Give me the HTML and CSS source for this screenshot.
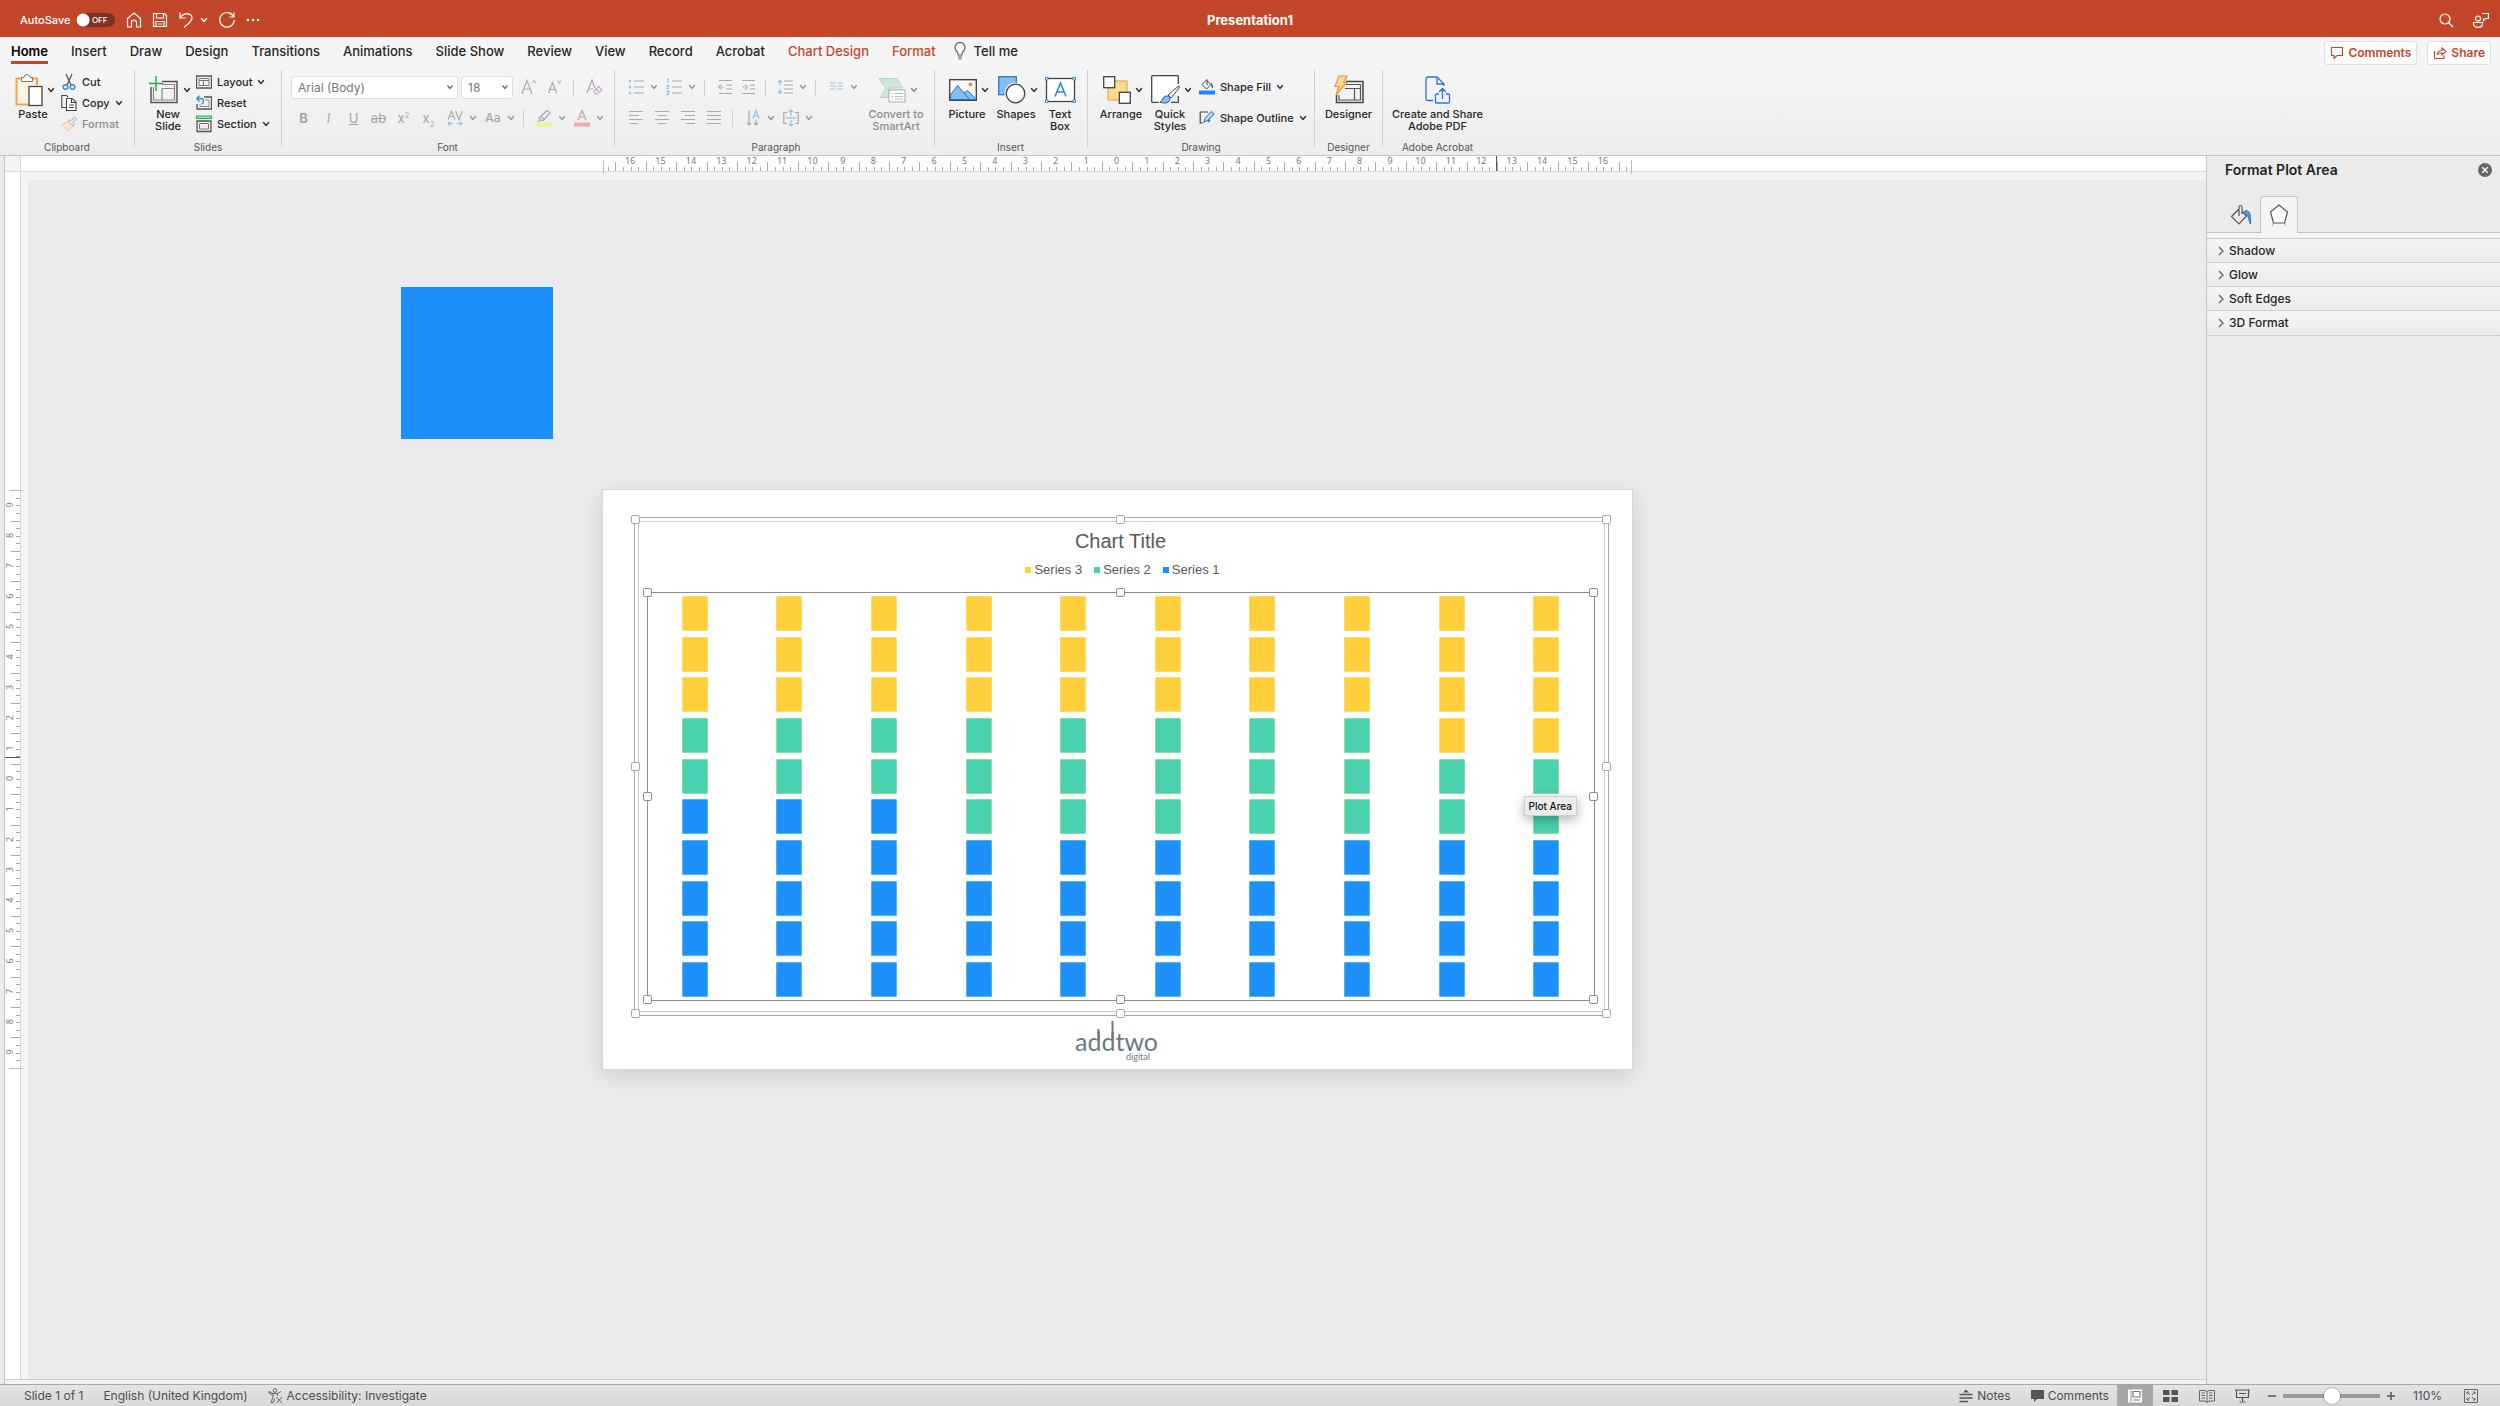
FILE: index.html
```html
<!DOCTYPE html>
<html lang="en">

<head>
    <meta charset="UTF-8">
    <meta name="viewport" content="width=device-width, initial-scale=1.0">

    <link rel="stylesheet" href="styles.css">

    <title>Presentation1</title>
</head>

<body>
    <svg class="defs" width="0" height="0">
        <symbol id="chev" viewBox="0 0 8 8"><path d="M1.5 2.5 L4 5.5 L6.5 2.5" fill="none" stroke="currentColor" stroke-width="1.4" stroke-linecap="round" stroke-linejoin="round"/></symbol>
        <symbol id="right" viewBox="0 0 6 10"><path d="M1 1 L5 5 L1 9" fill="none" stroke="currentColor" stroke-width="1.3"/></symbol>
    </svg>

    <header class="titlebar">
        <div class="quick">
            <label class="autosave">AutoSave <input type="checkbox" class="toggle"><span class="off">OFF</span></label>
            <button aria-label="Home"><svg width="16" height="18" viewBox="0 0 16 18"><path d="M1.5 7.5 L8 2 L14.5 7.5 V16 H10.5 V11.5 A2.5 2.5 0 0 0 5.5 11.5 V16 H1.5 Z"/></svg></button>
            <button aria-label="Save"><svg width="16" height="18" viewBox="0 0 16 18"><path d="M1.5 2.5 H12.5 L14.5 4.5 V15.5 H1.5 Z M4.5 2.5 V7 H11.5 V2.5 M4 15.5 V10.5 H12 V15.5 M6 13 H10"/></svg></button>
            <button aria-label="Undo" class="undo"><svg width="16" height="18" viewBox="0 0 16 18"><path d="M2 1.5 V7 H7.5 M2 7 C5 1.5 13 1.5 14 6.5 C14.5 10 10 13 6 16.5"/></svg></button>
            <button aria-label="Undo list"><svg class="chev" width="8" height="8"><use href="#chev"/></svg></button>
            <button aria-label="Redo"><svg width="18" height="18" viewBox="0 0 18 18"><path d="M15.5 5.5 A7.3 7.3 0 1 0 16.3 9 M16 1.5 V6 H11.5"/></svg></button>
            <button aria-label="More"><svg width="14" height="18" viewBox="0 0 14 18"><g fill="#fff" stroke="none"><circle cx="2" cy="9" r="1.3"/><circle cx="7" cy="9" r="1.3"/><circle cx="12" cy="9" r="1.3"/></g></svg></button>
        </div>
        <h1>Presentation1</h1>
        <div class="title-right">
            <button aria-label="Search"><svg width="16" height="18" viewBox="0 0 16 18"><circle cx="7" cy="8" r="5"/><path d="M10.5 11.5 L15 16"/></svg></button>
            <button aria-label="Share status"><svg width="18" height="18" viewBox="0 0 18 18"><circle cx="6" cy="7.5" r="2.5"/><path d="M1.5 11.5 H10.5 V13 C10.5 17.5 1.5 17.5 1.5 13 Z M10 2.5 H16.5 V7.5 H13.5 L11.5 9.5 V7.5"/></svg></button>
        </div>
    </header>

    <nav class="tabs">
        <a href="#" class="active">Home</a>
        <a href="#">Insert</a>
        <a href="#">Draw</a>
        <a href="#">Design</a>
        <a href="#">Transitions</a>
        <a href="#">Animations</a>
        <a href="#">Slide Show</a>
        <a href="#">Review</a>
        <a href="#">View</a>
        <a href="#">Record</a>
        <a href="#">Acrobat</a>
        <a href="#" class="context">Chart Design</a>
        <a href="#" class="context">Format</a>
        <a href="#" class="tell"><svg width="12" height="18" viewBox="0 0 12 18" fill="none" stroke="#555" stroke-width="1.1"><path d="M4 13 V11.5 C3.5 9.5 1 8.5 1 5.5 A5 5 0 0 1 11 5.5 C11 8.5 8.5 9.5 8 11.5 V13 Z M4 15 H8 M4.5 17 H7.5"/></svg>Tell me</a>
        <div class="tab-buttons">
            <button><svg width="14" height="14" viewBox="0 0 14 14"><path d="M1.5 1.5 H12.5 V9.5 H7 L4 12.5 V9.5 H1.5 Z"/></svg>Comments</button>
            <button><svg width="14" height="14" viewBox="0 0 14 14"><path d="M1.5 5 V12.5 H11 V9.5 M4 9 C4.5 6 6.5 4.5 9 4.5 V2 L13 5.5 L9 9 V6.7 C7 6.7 5 7.5 4 9 Z"/></svg>Share</button>
        </div>
    </nav>

    <section class="ribbon">
        <div class="group clipboard">
            <div class="content">
                <button class="big">
                    <span class="pic"><svg width="28" height="34" viewBox="0 0 28 34" fill="none"><path d="M8 5.5 H1.5 V31.5 H14" stroke="#f0a33f" stroke-width="2"/><path d="M16 5.5 H22 V12" stroke="#f0a33f" stroke-width="2"/><path d="M3 7 H20 V13 H12 V30 H3 Z" fill="#fdf5e4"/><path d="M6.5 8.5 V4.5 H9 A3 3 0 0 1 15 4.5 H17.5 V8.5 Z" fill="#fff" stroke="#777"/><rect x="14" y="13.5" width="13" height="19" fill="#fff" stroke="#444" stroke-width="1.3"/></svg><svg class="chev" width="8" height="8"><use href="#chev"/></svg></span>
                    Paste
                </button>
                <div class="col">
                    <button class="small"><svg width="16" height="18" viewBox="0 0 16 18" fill="none"><path d="M5 1 L10 12 M11 1 L6 12" stroke="#555" stroke-width="1.3"/><circle cx="4.5" cy="14" r="2.3" stroke="#2b88d8" stroke-width="1.4"/><circle cx="11.5" cy="14" r="2.3" stroke="#2b88d8" stroke-width="1.4"/></svg>Cut</button>
                    <button class="small"><svg width="16" height="18" viewBox="0 0 16 18" fill="none" stroke="#444" stroke-width="1.1"><path d="M5 13.5 H.8 V1.5 H5.5 L7 3"/><path d="M5.5 4.5 H11 L15 8 V16.5 H5.5 Z" fill="#fff"/><path d="M10.5 4.5 V8.5 H15 M8 11 H13 M8 13.5 H13"/></svg>Copy<svg class="chev" width="8" height="8"><use href="#chev"/></svg></button>
                    <button class="small off-btn" disabled><svg width="16" height="18" viewBox="0 0 16 18" fill="none"><path d="M7.5 6.5 L12 11 L7 16 L1 9.5 Z" fill="#fbe3cd" stroke="#f2c7a0"/><path d="M7 6 L9 4.5 L10.5 6 L13.5 2 L15.5 4 L12 7.5 L13.5 9.5 L12 11 Z" stroke="#aaa"/></svg>Format</button>
                </div>
            </div>
            <div class="name">Clipboard</div>
        </div>
        <div class="sep"></div>
        <div class="group slides">
            <div class="content">
                <button class="big">
                    <span class="pic"><svg width="30" height="30" viewBox="0 0 30 30" fill="none"><path d="M13 6.5 H28 V27.5 H2 V12" stroke="#555" stroke-width="1.5"/><path d="M13 9.5 H25.5 V25 H4.5 V12 M13 13.5 H25.5 M13 13.5 V25" stroke="#888" stroke-width="1.2"/><path d="M7 1 V16 M0 8.5 H14" stroke="#1fae54" stroke-width="1.5"/></svg><svg class="chev" width="8" height="8"><use href="#chev"/></svg></span>
                    New<br>Slide
                </button>
                <div class="col">
                    <button class="small"><svg width="16" height="16" viewBox="0 0 16 16" fill="none" stroke="#555"><path d="M.5 2 H15.5 V14 H.5 Z" stroke-width="1.3"/><path d="M3 4.5 H13 V11.5 H3 Z M3 6.5 H13 M7.5 6.5 V11.5" stroke="#777"/></svg>Layout<svg class="chev" width="8" height="8"><use href="#chev"/></svg></button>
                    <button class="small"><svg width="16" height="16" viewBox="0 0 16 16" fill="none" stroke="#555"><path d="M8 2 H15.5 V14 H1 V9" stroke-width="1.3"/><path d="M9 5 H13 V11.5 H4 V9" stroke="#888"/><path d="M1 3.5 H5 C8 3.5 8 8 6 9 M3.5 .8 L.8 3.5 L3.5 6.5" stroke="#2b88d8" stroke-width="1.3"/></svg>Reset</button>
                    <button class="small"><svg width="16" height="18" viewBox="0 0 16 18" fill="none" stroke="#555"><rect x=".5" y="1" width="15" height="2.5" stroke="#1fae54" fill="#a5dfba"/><path d="M1 6 H15 V16.5 H1 Z" stroke-width="1.3"/><path d="M3.5 8.5 H12.5 V14 H3.5 Z" stroke="#777"/></svg>Section<svg class="chev" width="8" height="8"><use href="#chev"/></svg></button>
                </div>
            </div>
            <div class="name">Slides</div>
        </div>
        <div class="sep"></div>
        <div class="group font">
            <div class="content rows">
                <div class="row">
                    <select class="family" aria-label="Font" disabled><option>Arial (Body)</option></select>
                    <select class="size" aria-label="Font size" disabled><option>18</option></select>
                    <button class="tool" disabled><svg width="16" height="18" viewBox="0 0 16 18"><path d="M1 16 L6 2.5 L11 16 M3 11 H9"/><path class="b" d="M11 5 L13 2.5 L15 5"/></svg></button>
                    <button class="tool" disabled><svg width="16" height="18" viewBox="0 0 16 18"><path d="M1.5 15 L5.5 4.5 L9.5 15 M3 11.5 H8"/><path class="b" d="M10.5 2.5 L12.5 5 L14.5 2.5"/></svg></button>
                    <i class="bar"></i>
                    <button class="tool" disabled><svg width="18" height="18" viewBox="0 0 18 18"><path d="M1 15 L6 2 L9 10 M3 11 H7"/><path d="M8 13 L12.5 8.5 L16 11.5 L11.5 16 H9.5 Z M10 11 L13.5 14.5" stroke="#d3a0d8"/></svg></button>
                </div>
                <div class="row">
                    <button class="letter" disabled><b>B</b></button>
                    <button class="letter" disabled><em>I</em></button>
                    <button class="letter" disabled><u>U</u></button>
                    <button class="letter" disabled><s>ab</s></button>
                    <button class="letter" disabled>x<sup>2</sup></button>
                    <button class="letter" disabled>x<sub>2</sub></button>
                    <button class="drop" disabled><svg width="16" height="18" viewBox="0 0 16 18"><path d="M1 10.5 L4.5 2 L8 10.5 M2.2 7.5 H6.8 M8.5 2 L12 10.5 L15.5 2"/><path class="b" d="M1 14.5 H6.5 M9.5 14.5 H15 M3 12.5 L1 14.5 L3 16.5 M13 12.5 L15 14.5 L13 16.5"/></svg><svg class="chev" width="8" height="8"><use href="#chev"/></svg></button>
                    <button class="drop" disabled><span class="aa">Aa</span><svg class="chev" width="8" height="8"><use href="#chev"/></svg></button>
                    <i class="bar"></i>
                    <button class="drop" disabled><svg width="16" height="18" viewBox="0 0 16 18"><path d="M4 11 L3 9 L11 1.5 L14 4 L7 11.5 L4 11 L2 13 M5 7.5 L8.5 10.5"/><path d="M0 15.5 H16" stroke="#f5f08f" stroke-width="4"/></svg><svg class="chev" width="8" height="8"><use href="#chev"/></svg></button>
                    <button class="drop" disabled><svg width="16" height="18" viewBox="0 0 16 18"><path d="M4 11 L8 1.5 L12 11 M5.3 8 H10.7"/><path d="M0 15.5 H16" stroke="#f7a6a0" stroke-width="4"/></svg><svg class="chev" width="8" height="8"><use href="#chev"/></svg></button>
                </div>
            </div>
            <div class="name">Font</div>
        </div>
        <div class="sep"></div>
        <div class="group paragraph">
            <div class="content">
                <div class="rows">
                    <div class="row">
                        <button class="drop" disabled><svg width="16" height="18" viewBox="0 0 16 18"><path d="M6 3 H16 M6 9 H16 M6 15 H16"/><path class="b" d="M1 3 H3 M1 9 H3 M1 15 H3" stroke-width="2.5"/></svg><svg class="chev" width="8" height="8"><use href="#chev"/></svg></button>
                        <button class="drop" disabled><svg width="16" height="18" viewBox="0 0 16 18"><path d="M6 3 H16 M6 9 H16 M6 15 H16"/><path class="b" d="M1 1.5 L2 1 V4.5 M.5 7.5 H3 L.5 10.5 H3 M.5 13 H3 L1.5 14.5 L3 15.5 L.5 17"/></svg><svg class="chev" width="8" height="8"><use href="#chev"/></svg></button>
                        <i class="bar"></i>
                        <button class="tool" disabled><svg width="16" height="18" viewBox="0 0 16 18"><path d="M2 2.5 H15 M9 7 H15 M9 11 H15 M2 15.5 H15"/><path class="b" d="M7 9 H1.5 M4 6.5 L1.5 9 L4 11.5"/></svg></button>
                        <button class="tool" disabled><svg width="16" height="18" viewBox="0 0 16 18"><path d="M1 2.5 H14 M9 7 H14 M9 11 H14 M1 15.5 H14"/><path class="b" d="M1 9 H6.5 M4 6.5 L6.5 9 L4 11.5"/></svg></button>
                        <i class="bar"></i>
                        <button class="drop" disabled><svg width="16" height="18" viewBox="0 0 16 18"><path d="M7 3 H16 M7 7 H16 M7 11 H16 M7 15 H16"/><path class="b" d="M3 2.5 V7.5 M3 10.5 V15.5 M1 4.5 L3 2.5 L5 4.5 M1 13.5 L3 15.5 L5 13.5"/></svg><svg class="chev" width="8" height="8"><use href="#chev"/></svg></button>
                        <i class="bar"></i>
                        <button class="drop" disabled><svg width="16" height="18" viewBox="0 0 16 18"><path class="b" d="M2 5 H7.5 M2 8 H7.5 M2 11 H7.5 M9.5 5 H15 M9.5 8 H15 M9.5 11 H15"/></svg><svg class="chev" width="8" height="8"><use href="#chev"/></svg></button>
                    </div>
                    <div class="row">
                        <button class="tool" disabled><svg width="16" height="18" viewBox="0 0 16 18"><path d="M1 2.5 H15 M1 6.5 H11 M1 10.5 H15 M1 14.5 H10"/></svg></button>
                        <button class="tool" disabled><svg width="16" height="18" viewBox="0 0 16 18"><path d="M1 2.5 H15 M3.5 6.5 H12.5 M1 10.5 H15 M3.5 14.5 H12.5"/></svg></button>
                        <button class="tool" disabled><svg width="16" height="18" viewBox="0 0 16 18"><path d="M1 2.5 H15 M5 6.5 H15 M1 10.5 H15 M6 14.5 H15"/></svg></button>
                        <button class="tool" disabled><svg width="16" height="18" viewBox="0 0 16 18"><path d="M1 2.5 H15 M1 6.5 H15 M1 10.5 H15 M1 14.5 H15"/></svg></button>
                        <i class="bar"></i>
                        <button class="drop" disabled><svg width="16" height="18" viewBox="0 0 16 18"><path d="M4 1.5 V16 M2 14 L4 16 L6 14 M11 10.5 V16 M9 14 L11 16 L13 14"/><path class="b" d="M8 9.5 L11 1.5 L14 9.5 M9 7 H13"/></svg><svg class="chev" width="8" height="8"><use href="#chev"/></svg></button>
                        <button class="drop" disabled><svg width="16" height="18" viewBox="0 0 16 18"><path d="M4 3.5 H.8 V14.5 H4 M12 3.5 H15.2 V14.5 H12 M3 9 H13"/><path class="b" d="M8 1 V7 M8 11 V17 M6 3 L8 1 L10 3 M6 15 L8 17 L10 15"/></svg><svg class="chev" width="8" height="8"><use href="#chev"/></svg></button>
                    </div>
                </div>
                <button class="big off-btn" disabled>
                    <span class="pic"><svg width="28" height="26" viewBox="0 0 28 26"><path d="M1 1.5 H19 L25 11 H11 V20.5 H2 L8 11 Z" fill="#cfe8d5" stroke="#b3d9bd"/><rect x="11" y="13" width="16" height="12" fill="#fff" stroke="#aaa"/><path d="M13.5 16.5 H15 M17 16.5 H25 M13.5 19.5 H15 M17 19.5 H25 M13.5 22 H15 M17 22 H25" stroke="#bbb"/></svg><svg class="chev" width="8" height="8"><use href="#chev"/></svg></span>
                    Convert to<br>SmartArt
                </button>
            </div>
            <div class="name">Paragraph</div>
        </div>
        <div class="sep"></div>
        <div class="group insert">
            <div class="content">
                <button class="big">
                    <span class="pic"><svg width="28" height="22" viewBox="0 0 28 22"><rect x=".7" y=".7" width="26.6" height="20.6" fill="#fff" stroke="#444" stroke-width="1.4"/><path d="M1.5 16 L8.5 6.5 L15 14 L18.5 11.5 L26.5 19.5 V20.5 H1.5 Z" fill="#83bef0" stroke="#1f74c4"/><path d="M15 14 L20.5 20.5" stroke="#1f74c4"/><circle cx="21.5" cy="5.5" r="2" fill="#f28c3c"/></svg><svg class="chev" width="8" height="8"><use href="#chev"/></svg></span>
                    Picture
                </button>
                <button class="big">
                    <span class="pic"><svg width="28" height="28" viewBox="0 0 28 28"><rect x=".7" y=".7" width="17.6" height="18" fill="#83bef0" stroke="#1f74c4" stroke-width="1.2"/><circle cx="17.5" cy="17.5" r="11" fill="#f3f3f3"/><circle cx="17.5" cy="17.5" r="9.3" fill="#fff" stroke="#444" stroke-width="1.3"/></svg><svg class="chev" width="8" height="8"><use href="#chev"/></svg></span>
                    Shapes
                </button>
                <button class="big narrow">
                    <span class="pic"><svg width="31" height="26" viewBox="0 0 31 26"><rect x="1.5" y="1.5" width="28" height="23" fill="#fff" stroke="#444" stroke-width="1.3"/><path d="M10 19.5 L15.5 6 L21 19.5 M12 15 H19" fill="none" stroke="#2b88d8" stroke-width="1.6"/><path d="M.5 .5 H3 V3 H.5 Z M28 .5 H30.5 V3 H28 Z M.5 23 H3 V25.5 H.5 Z M28 23 H30.5 V25.5 H28 Z" fill="#fff" stroke="#2b88d8"/></svg></span>
                    Text<br>Box
                </button>
            </div>
            <div class="name">Insert</div>
        </div>
        <div class="sep"></div>
        <div class="group drawing">
            <div class="content">
                <button class="big">
                    <span class="pic"><svg width="28" height="28" viewBox="0 0 28 28"><rect x="5" y="5" width="19" height="19" fill="#fadc8e" stroke="#efa050" stroke-width="1.2"/><rect x=".7" y=".7" width="11" height="11" fill="#fff" stroke="#444" stroke-width="1.3"/><rect x="16.3" y="16.3" width="11" height="11" fill="#fff" stroke="#444" stroke-width="1.3"/></svg><svg class="chev" width="8" height="8"><use href="#chev"/></svg></span>
                    Arrange
                </button>
                <button class="big">
                    <span class="pic"><svg width="29" height="29" viewBox="0 0 29 29"><path d="M8 27.3 H1.5 Q.7 27.3 .7 26.5 V1.5 Q.7 .7 1.5 .7 H26.5 Q27.3 .7 27.3 1.5 V9 M27.3 21 V27.3 H20" fill="#fff" stroke="#444" stroke-width="1.3"/><path d="M17 20 L27 11.5 Q29 10.5 28 13 L20 23 Z" fill="#fff" stroke="#444"/><path d="M9 27 C12 26 11 22 15 21 C19 21 20 24 18 26.5 C16 28.5 12 28.5 9 27 Z" fill="#83bef0" stroke="#1f5f9f"/></svg><svg class="chev" width="8" height="8"><use href="#chev"/></svg></span>
                    Quick<br>Styles
                </button>
                <div class="rows">
                    <div class="row"><button class="small"><svg width="16" height="18" viewBox="0 0 16 18" fill="none"><path d="M3 6.5 L8 1.5 V7 M8 2.5 L12 6.5 L7.5 11 L3 6.5" stroke="#444"/><path d="M12 5 Q14.5 6 14 10.5 Q12 9 12 6" fill="#1f5f9f"/><path d="M0 14.5 H16" stroke="#1c87fb" stroke-width="4"/></svg>Shape Fill<svg class="chev" width="8" height="8"><use href="#chev"/></svg></button></div>
                    <div class="row"><button class="small"><svg width="16" height="18" viewBox="0 0 16 18" fill="none"><path d="M9 3 H1.2 V14 H4 M9 13 L11 11" stroke="#444" stroke-width="1.2"/><path d="M5 13 L6 9.5 L12.5 2.5 L15 5 L8.5 11.5 Z" fill="#cfe6fa" stroke="#2b88d8" stroke-width="1.1"/></svg>Shape Outline<svg class="chev" width="8" height="8"><use href="#chev"/></svg></button></div>
                </div>
            </div>
            <div class="name">Drawing</div>
        </div>
        <div class="sep"></div>
        <div class="group designer">
            <div class="content">
                <button class="big">
                    <span class="pic"><svg width="30" height="30" viewBox="0 0 30 30" fill="none"><path d="M12 6.5 H29 V27.5 H2.5 V20" stroke="#444" stroke-width="1.5"/><path d="M12 9.5 H26.5 V25 H5 V20 M11 13.5 H26.5 M20.5 13.5 V25" stroke="#555" stroke-width="1.2"/><path d="M5 1 H13 L9.5 7.5 H12.5 L2 20 L5 11.5 H1 Z" fill="#fadc8e" stroke="#ef8f3c" stroke-width="1.2"/></svg></span>
                    Designer
                </button>
            </div>
            <div class="name">Designer</div>
        </div>
        <div class="sep"></div>
        <div class="group acrobat">
            <div class="content">
                <button class="big">
                    <span class="pic"><svg width="26" height="28" viewBox="0 0 26 28" fill="none" stroke="#2a73e8" stroke-width="1.3" stroke-linejoin="round"><path d="M8 24.5 H3 Q1 24.5 1 22.5 V3 Q1 1 3 1 H12 L19 8 V10 M12 1 V8 H19"/><path d="M14 18 H11.5 Q10.5 18 10.5 19 V26 Q10.5 27 11.5 27 H23.5 Q24.5 27 24.5 26 V19 Q24.5 18 23.5 18 H21 M17.5 23 V13 M14 16 L17.5 12.5 L21 16"/></svg></span>
                    Create and Share<br>Adobe PDF
                </button>
            </div>
            <div class="name">Adobe Acrobat</div>
        </div>
    </section>

    <main>
        <div class="editor">
            <div class="corner"></div>
            <div class="ruler-h"><svg id="rulerH" width="1029" height="18"></svg></div>
            <div class="ruler-v"><svg id="rulerV" width="18" height="579"></svg></div>
            <div class="canvas">
                <div class="shape"></div>
                <div class="slide">
                    <div class="chart">
                        <h2>Chart Title</h2>
                        <ul class="legend">
                            <li class="s3">Series 3</li>
                            <li class="s2">Series 2</li>
                            <li class="s1">Series 1</li>
                        </ul>
                        <div class="plot">
                            <div class="cells" id="cells"></div>
                            <i class="h nw"></i><i class="h n"></i><i class="h ne"></i><i class="h e"></i>
                            <i class="h se"></i><i class="h s"></i><i class="h sw"></i><i class="h w"></i>
                        </div>
                        <i class="h soft nw"></i><i class="h soft n"></i><i class="h soft ne"></i><i class="h soft e"></i>
                        <i class="h soft se"></i><i class="h soft s"></i><i class="h soft sw"></i><i class="h soft w"></i>
                    </div>
                    <svg class="logo" width="90" height="42" viewBox="0 0 90 42">
                        <g stroke="#6b7884" stroke-width="2"><path d="M24.5 9 V20 M38.5 1 V20"/></g>
                        <text x="1" y="31" font-size="25">addtwo</text>
                        <text x="52" y="40" font-size="9">digital</text>
                    </svg>
                    <div class="tip">Plot Area</div>
                </div>
            </div>
            <div class="vscroll"></div>
        </div>

        <aside class="pane">
            <div class="pane-head">
                <h3>Format Plot Area</h3>
                <button aria-label="Close"><svg width="14" height="14" viewBox="0 0 14 14"><circle cx="7" cy="7" r="7" fill="#666"/><path d="M4.3 4.3 L9.7 9.7 M9.7 4.3 L4.3 9.7" stroke="#fff" stroke-width="1.3"/></svg></button>
            </div>
            <div class="pane-tabs">
                <button aria-label="Fill and line"><svg width="22" height="22" viewBox="0 0 22 22" fill="none"><path d="M9 12 V3.5 Q9 1.5 10.5 1.5 Q12 1.5 12 3.5 V10 M9 5 L1.5 12.5 L9 20 L16.5 12 L12 7.5" stroke="#555" stroke-width="1.2"/><path d="M14 7.5 C18 5 21.5 8 20.5 20 C18.5 17 19 11 15.5 10 Z" fill="#4ba0e8" stroke="#1f74c4"/></svg></button>
                <button aria-label="Effects" class="on"><svg width="20" height="24" viewBox="0 0 20 24" fill="none"><path d="M10 2 L18.5 9 L15.5 20 H4.5 L1.5 9 Z" fill="#fff" stroke="#555" stroke-width="1.2"/><path d="M4 20 L3.5 23 M16 20 L16.5 23" stroke="#aaa"/></svg></button>
            </div>
            <div class="sections">
                <button><svg width="6" height="10"><use href="#right"/></svg>Shadow</button>
                <button><svg width="6" height="10"><use href="#right"/></svg>Glow</button>
                <button><svg width="6" height="10"><use href="#right"/></svg>Soft Edges</button>
                <button><svg width="6" height="10"><use href="#right"/></svg>3D Format</button>
            </div>
        </aside>
    </main>

    <footer class="status">
        <span>Slide 1 of 1</span>
        <button>English (United Kingdom)</button>
        <button class="access"><svg width="15" height="16" viewBox="0 0 15 16" fill="none" stroke="#666"><circle cx="7" cy="2.5" r="1.8"/><path d="M1 3.5 L5 5.5 V9 L3 14.5 L5 15 L7 10.5 M13 3.5 L9.5 5.5 V8 M5 5.5 H9.5 M1 3.5 L.8 5 L4.5 7 M8.5 9 L14 15 M14 9 L8.5 15"/></svg>Accessibility: Investigate</button>
        <div class="right">
            <button class="notes"><svg width="14" height="14" viewBox="0 0 14 14"><path d="M7 .5 L10 3.5 H4 Z" fill="#555"/><path d="M.5 5.5 H13.5 M.5 9 H13.5 M.5 12.5 H9" stroke="#555" stroke-width="1.3"/></svg>Notes</button>
            <button class="cmts"><svg width="13" height="13" viewBox="0 0 13 13"><path d="M0 1 H13 V10 H6 L3 13 V10 H0 Z" fill="#555"/></svg>Comments</button>
            <button class="view on" aria-label="Normal"><svg width="14" height="14" viewBox="0 0 14 14" fill="none"><path d="M0 .5 H14 V13.5 H0 Z" fill="#fff"/><path d="M5 2.5 H12 V8 H5 Z M5 11 H12" stroke="#777" stroke-width="1.2"/><path d="M3 .5 V13.5" stroke="#999"/></svg></button>
            <button class="view" aria-label="Slide sorter"><svg width="15" height="12" viewBox="0 0 15 12"><path d="M0 0 H6.5 V5 H0 Z M8.5 0 H15 V5 H8.5 Z M0 7 H6.5 V12 H0 Z M8.5 7 H15 V12 H8.5 Z" fill="#555"/></svg></button>
            <button class="view" aria-label="Reading view"><svg width="16" height="14" viewBox="0 0 16 14" fill="none" stroke="#666"><path d="M.5 1.5 H6 L8 2.5 L10 1.5 H15.5 V12 H10 L8 13.5 L6 12 H.5 Z M8 2.5 V13 M2.5 4 H6 M2.5 6.5 H6 M2.5 9 H6 M10 4 H13.5 M10 6.5 H13.5 M10 9 H13.5"/></svg></button>
            <button class="view" aria-label="Slide show"><svg width="15" height="14" viewBox="0 0 15 14" fill="none" stroke="#555" stroke-width="1.2"><path d="M0 1 H15 M1.5 1 V8.5 H13.5 V1 M4 4.5 H11 M7.5 8.5 V12 M4.5 13 H10.5"/></svg></button>
            <button class="zoom-btn" aria-label="Zoom out"><svg width="8" height="8"><path d="M0 4 H8" stroke="#555" stroke-width="1.5"/></svg></button>
            <input type="range" min="0" max="100" value="51" aria-label="Zoom">
            <button class="zoom-btn" aria-label="Zoom in"><svg width="8" height="8"><path d="M0 4 H8 M4 0 V8" stroke="#555" stroke-width="1.5"/></svg></button>
            <span class="pct">110%</span>
            <button class="fit" aria-label="Fit slide"><svg width="14" height="14" viewBox="0 0 14 14" fill="none" stroke="#666"><path d="M.5 .5 H13.5 V13.5 H.5 Z M3 5 V3 H5 M9 3 H11 V5 M11 9 V11 H9 M5 11 H3 V9 M3 3 L6 6 M11 3 L8 6 M11 11 L8 8 M3 11 L6 8"/></svg></button>
        </div>
    </footer>

    <script type="text/javascript">
        // rows from the top, one letter per column
        let rows = [
            'yyyyyyyyyy',
            'yyyyyyyyyy',
            'yyyyyyyyyy',
            'ggggggggyy',
            'gggggggggg',
            'bbbggggggg',
            'bbbbbbbbbb',
            'bbbbbbbbbb',
            'bbbbbbbbbb',
            'bbbbbbbbbb'
        ];
        let cells = document.querySelector('#cells');

        rows.forEach((row) => {
            row.split('').forEach((c) => {
                let el = document.createElement('i');
                el.className = c;
                cells.appendChild(el);
            })
        })

        function drawRuler(svg, length, max, vertical, cursor) {
            let cm = 30.4;
            let mid = length / 2;
            let out = '';

            function tick(pos, from, to, color) {
                pos = Math.floor(pos) + 0.5;
                out += vertical
                    ? `<path d="M${from} ${pos} H${to}" stroke="${color}"/>`
                    : `<path d="M${pos} ${from} V${to}" stroke="${color}"/>`;
            }

            for (let q = -Math.floor(mid / cm * 4); q <= mid / cm * 4; q++) {
                let half = Math.abs(q % 4) == 2;
                tick(mid + q * cm / 4, half ? 6 : 11, 15, '#aaa');
            }
            for (let n = -max; n <= max; n++) {
                let pos = mid + n * cm - 1;
                out += vertical
                    ? `<text transform="translate(8 ${pos}) rotate(-90)">${Math.abs(n)}</text>`
                    : `<text x="${pos}" y="8">${Math.abs(n)}</text>`;
            }
            tick(0, 4, 18, '#bbb');
            tick(length - 1, 4, 18, '#bbb');
            tick(cursor, 0, 15, '#555');
            svg.innerHTML = out;
        }

        drawRuler(document.querySelector('#rulerH'), 1029, 16, false, 893);
        drawRuler(document.querySelector('#rulerV'), 579, 9, true, 267);
    </script>
</body>

</html>
```
FILE: styles.css
```css
* {
    box-sizing: border-box;
}

html,
body {
    height: 100%;
    margin: 0;
}

body {
    display: flex;
    flex-direction: column;
    overflow: hidden;
    background-color: #ebebeb;
    color: #262626;
    font: 11px/12px Inter, "Liberation Sans", sans-serif;
}

button {
    padding: 0;
    border: 0;
    background: none;
    color: inherit;
    font: inherit;
}

h1,
h2,
h3,
ul {
    margin: 0;
    padding: 0;
}

svg {
    flex: none;
    display: block;
}

.defs {
    position: absolute;
}

.chev {
    color: #333;
}

/* Title bar */
.titlebar {
    display: grid;
    grid-template-columns: 1fr auto 1fr;
    align-items: center;
    height: 37px;
    padding: 2px 10px 0;
    background-color: #c24728;
    color: #fff;
}

.titlebar h1 {
    font-size: 13px;
    line-height: 16px;
    font-weight: 700;
}

.titlebar svg {
    fill: none;
    stroke: #fff;
    stroke-width: 1.2;
}

.titlebar .chev {
    color: #fff;
    stroke: none;
}

.quick {
    display: flex;
    align-items: center;
    gap: 10px;
    padding-left: 10px;
}

.autosave {
    position: relative;
    display: flex;
    align-items: center;
    gap: 6px;
    margin-right: 1px;
    font-weight: 500;
}

.toggle {
    appearance: none;
    width: 39px;
    height: 14px;
    margin: 0;
    border-radius: 7px;
    background: radial-gradient(circle at 7px 7px, #fff 6px, transparent 7px), #7d3122;
}

.off {
    position: absolute;
    right: 8px;
    font-size: 8px;
}

.undo {
    margin-right: -4px;
}

.title-right {
    display: flex;
    justify-content: flex-end;
    gap: 18px;
}

/* Tabs */
.tabs {
    display: flex;
    align-items: flex-start;
    gap: 23px;
    height: 28px;
    padding: 0 9px 0 11px;
    background-color: #f5f5f5;
    font-size: 13px;
    font-weight: 500;
}

.tabs a {
    height: 27px;
    padding-top: 1px;
    color: #262626;
    line-height: 26px;
    text-decoration: none;
}

.tabs .active {
    color: #000;
    font-weight: 600;
    border-bottom: 3px solid #c24728;
}

.tabs .context {
    color: #c24728;
}

.tabs .tell {
    display: flex;
    align-items: center;
    gap: 8px;
    margin-left: -5px;
}

.tab-buttons {
    display: flex;
    gap: 10px;
    margin: 4px 0 0 auto;
}

.tab-buttons button {
    display: flex;
    align-items: center;
    gap: 4px;
    height: 24px;
    padding: 0 5px;
    border: 1px solid #ddd;
    border-radius: 3px;
    background-color: #fff;
    color: #c24728;
    font-size: 12px;
    font-weight: 600;
}

.tab-buttons svg {
    fill: none;
    stroke: #c24728;
    stroke-width: 1.1;
}

/* Ribbon */
.ribbon {
    display: flex;
    align-items: flex-start;
    height: 91px;
    padding-top: 5px;
    border-bottom: 1px solid #c6c6c6;
    background: linear-gradient(#f5f5f5, #ededed);
    font-weight: 500;
}

.sep {
    width: 1px;
    height: 77px;
    background-color: #d0d0d0;
}

.content {
    display: flex;
    height: 70px;
}

.name {
    padding-right: 10px;
    color: #555;
    font-size: 10px;
    line-height: 14px;
    font-weight: 400;
    text-align: center;
}

.clipboard {
    width: 134px;
    padding-left: 10px;
}

.slides {
    width: 146px;
    padding-left: 10px;
}

.font {
    width: 332px;
    padding-left: 9px;
}

.paragraph {
    width: 319px;
    padding-left: 13px;
}

.paragraph .rows {
    width: 238px;
}

.insert {
    width: 152px;
    padding-left: 9px;
}

.drawing {
    width: 226px;
    padding-left: 10px;
}

.insert .content,
.drawing .content {
    gap: 3px;
}

.drawing .rows {
    margin-left: 3px;
}

.designer {
    width: 67px;
}

.acrobat {
    width: 109px;
}

.designer .content,
.acrobat .content {
    justify-content: center;
}

.designer .name,
.acrobat .name {
    padding-right: 0;
}

.big {
    min-width: 46px;
    display: flex;
    flex-direction: column;
    align-items: center;
    padding-top: 1px;
    text-align: center;
}

.big.narrow {
    min-width: 36px;
}

.pic {
    display: flex;
    align-items: center;
    gap: 4px;
    height: 37px;
}

.pic .chev {
    margin-right: -3px;
}

.off-btn,
.off-btn .chev {
    color: #8c8c8c;
}

.paragraph .big {
    min-width: 60px;
}

.col {
    padding: 1px 0 0 5px;
}

.small {
    display: flex;
    align-items: center;
    gap: 5px;
    height: 21px;
}

.rows {
    display: flex;
    flex-direction: column;
    gap: 9px;
    padding-top: 6px;
}

.row {
    display: flex;
    align-items: center;
    height: 22px;
}

.row select {
    appearance: none;
    height: 23px;
    padding: 0 6px;
    border: 1px solid #ddd;
    border-radius: 3px;
    background: #fff url("data:image/svg+xml,%3Csvg xmlns='http://www.w3.org/2000/svg' width='8' height='8'%3E%3Cpath d='M1.5 2.5 L4 5.5 L6.5 2.5' fill='none' stroke='%23666' stroke-width='1.3'/%3E%3C/svg%3E") no-repeat right 3px center;
    color: #777;
    font: 12px Inter, sans-serif;
    opacity: 1;
}

.row .family {
    width: 167px;
    margin-right: 3px;
}

.row .size {
    width: 52px;
    margin-right: 8px;
}

.tool {
    width: 18px;
    margin-right: 8px;
}

.drop {
    display: flex;
    align-items: center;
    gap: 6px;
    margin-right: 8px;
}

.tool svg,
.drop svg {
    fill: none;
    stroke: #aaa;
    stroke-width: 1.2;
}

.tool .b,
.drop .b {
    stroke: #92c3e8;
}

.drop .chev {
    color: #999;
    stroke: none;
}

.bar {
    width: 1px;
    height: 17px;
    margin-right: 12px;
    background-color: #d0d0d0;
}

.letter {
    width: 25px;
    color: #a5a5a5;
    font-size: 13px;
    font-weight: 400;
}

.letter + .drop {
    margin-left: 6px;
}

.letter sup,
.letter sub {
    color: #92c3e8;
    font-size: 8px;
    line-height: 0;
}

.aa {
    width: 16px;
    color: #a5a5a5;
    font-size: 12px;
}

/* Work area */
main {
    flex: 1;
    display: flex;
    min-height: 0;
}

.editor {
    flex: 1;
    display: grid;
    grid-template-columns: 16px 1fr;
    grid-template-rows: 16px 1fr 5px;
    margin-left: 4px;
    border-left: 1px solid #c4c4c4;
    background-color: #f4f4f4;
}

.corner {
    border-bottom: 1px solid #d8d8d8;
    border-right: 1px solid #d8d8d8;
}

.ruler-h {
    display: flex;
    justify-content: center;
    padding-left: 7px;
    border-bottom: 1px solid #d8d8d8;
    background-color: #fff;
}

.ruler-v {
    display: flex;
    align-items: center;
    padding-top: 8px;
    border-right: 1px solid #d8d8d8;
    background-color: #fff;
}

.ruler-h svg,
.ruler-v svg {
    overflow: visible;
}

.ruler-h text,
.ruler-v text {
    fill: #777;
    font: 9px "Noto Sans", sans-serif;
    text-anchor: middle;
}

.canvas {
    position: relative;
    display: flex;
    align-items: center;
    justify-content: center;
    margin: 8px 0 0 7px;
    background-color: #ebebeb;
}

.vscroll {
    grid-column: 1 / 3;
    border-top: 1px solid #ccc;
}

/* free shape on the pasteboard */
.shape {
    position: absolute;
    left: 373px;
    top: 107px;
    width: 152px;
    height: 152px;
    background-color: #1e90fc;
}

.slide {
    position: relative;
    width: 1029px;
    height: 579px;
    padding: 31px 27px 0 35px;
    outline: 1px solid #d6d6d6;
    background-color: #fff;
    box-shadow: 0 6px 22px rgba(0, 0, 0, 0.14);
}

.chart {
    position: relative;
    height: 491px;
    padding: 9px 9px 0 8px;
    border: 1px solid #cacaca;
    outline: 1px solid #a8a8a8;
    outline-offset: 3px;
    color: #595959;
    font-family: "Liberation Sans", Arial, sans-serif;
    text-align: center;
}

.chart h2 {
    font-size: 20px;
    font-weight: 400;
    line-height: 20px;
}

.legend {
    display: flex;
    justify-content: center;
    gap: 12px;
    height: 16px;
    margin: 11px 0 14px;
    padding-left: 4px;
    list-style: none;
    font-size: 13px;
    line-height: 16px;
}

.legend li {
    display: flex;
    align-items: center;
    gap: 3px;
}

.legend li::before {
    content: "";
    width: 6px;
    height: 6px;
}

.s3::before {
    background-color: #ffd03b;
}

.s2::before {
    background-color: #4ad2b0;
}

.s1::before {
    background-color: #1e90fc;
}

.plot {
    position: relative;
    height: 409px;
    border: 1px solid #8c8c8c;
}

.cells {
    display: grid;
    grid-template-columns: repeat(10, 1fr);
    grid-template-rows: repeat(10, 1fr);
    place-items: center;
    height: 100%;
}

.cells i {
    width: 26px;
    height: 35px;
    border: 1px solid #ffdb6b;
    border-radius: 1px;
    background-color: #ffd03b;
}

.cells .g {
    border-color: #8fdc9c;
    background-color: #4ad2b0;
}

.cells .b {
    border-color: #4db8dc;
    background-color: #1e90fc;
}

/* selection handles */
.h {
    position: absolute;
    left: 0;
    top: 0;
    width: 9px;
    height: 9px;
    margin: -5px;
    border: 1px solid #8c8c8c;
    border-radius: 2px;
    background-color: #fff;
}

.h.n,
.h.s {
    left: 50%;
}

.h.ne,
.h.e,
.h.se {
    left: 100%;
}

.h.e,
.h.w {
    top: 50%;
}

.h.se,
.h.s,
.h.sw {
    top: 100%;
}

/* the chart's own handles sit between its two frame lines */
.h.soft {
    border-color: #a8a8a8;
}

.h.soft.nw,
.h.soft.w,
.h.soft.sw {
    margin-left: -8px;
}

.h.soft.ne,
.h.soft.e,
.h.soft.se {
    margin-left: -2px;
}

.h.soft.nw,
.h.soft.n,
.h.soft.ne {
    margin-top: -7px;
}

.h.soft.se,
.h.soft.s,
.h.soft.sw {
    margin-top: -2px;
}

.logo {
    margin: 8px auto 0 436px;
}

.logo text {
    fill: #6b7884;
    font-family: Lato, sans-serif;
}

.tip {
    position: absolute;
    left: 921px;
    top: 306px;
    padding: 2px 4px;
    border: 1px solid #cfcfcf;
    background-color: #ececec;
    box-shadow: 0 4px 12px rgba(0, 0, 0, 0.3);
    color: #111;
    line-height: 14px;
    font-size: 10px;
    font-weight: 500;
}

/* Format pane */
.pane {
    width: 294px;
    border-left: 1px solid #c4c4c4;
}

.pane-head {
    display: flex;
    justify-content: space-between;
    align-items: center;
    height: 28px;
    padding: 0 8px 0 18px;
}

.pane-head h3 {
    font-size: 14px;
    font-weight: 600;
}

.pane-tabs {
    display: flex;
    align-items: flex-end;
    height: 49px;
    padding-left: 15px;
    border-bottom: 1px solid #c4c4c4;
}

.pane-tabs button {
    display: flex;
    align-items: center;
    justify-content: center;
    width: 38px;
    height: 37px;
    margin-bottom: -1px;
}

.pane-tabs .on {
    border: 1px solid #c4c4c4;
    border-bottom: 0;
    border-radius: 3px 3px 0 0;
    background-color: #f5f5f5;
}

.sections {
    padding-top: 5px;
    background-color: #f5f5f5;
}

.sections button {
    display: flex;
    align-items: center;
    gap: 5px;
    width: 100%;
    height: 24px;
    padding-left: 11px;
    border-top: 1px solid #ccc;
    background: linear-gradient(#f5f5f5, #ececec);
    font-size: 12px;
    font-weight: 500;
}

.sections button:last-child {
    height: 26px;
    border-bottom: 1px solid #ccc;
}

.sections svg {
    color: #666;
}

/* Status bar */
.status {
    display: flex;
    align-items: center;
    height: 22px;
    padding: 0 22px 0 24px;
    border-top: 1px solid #aaa;
    background: linear-gradient(#e4e4e4, #d8d8d8);
    color: #4d4d4d;
    font-size: 12px;
}

.status > button {
    margin-left: 20px;
}

.access,
.notes,
.cmts {
    display: flex;
    align-items: center;
    gap: 4px;
}

.right {
    display: flex;
    align-items: center;
    height: 21px;
    margin-left: auto;
}

.cmts {
    margin: 0 8px 0 20px;
}

.view {
    display: flex;
    align-items: center;
    justify-content: center;
    width: 36px;
    height: 21px;
}

.view.on {
    background-color: #a6a6a6;
}

.zoom-btn {
    margin: 0 7px;
}

.right input {
    appearance: none;
    width: 97px;
    height: 16px;
    margin: 0;
    background: linear-gradient(#999, #999) center / 100% 4px no-repeat;
}

.right input::-webkit-slider-thumb {
    appearance: none;
    width: 16px;
    height: 16px;
    border-radius: 50%;
    background-color: #fff;
    box-shadow: 0 0 2px rgba(0, 0, 0, 0.5);
}

.pct {
    margin: 0 22px 0 11px;
}
```
